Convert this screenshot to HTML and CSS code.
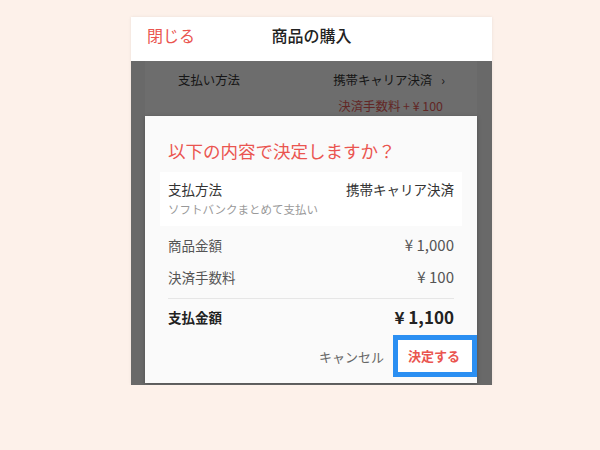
FILE: index.html
```html
<!DOCTYPE html>
<html lang="ja">
<head>
<meta charset="utf-8">
<title>商品の購入</title>
<link rel="stylesheet" href="styles.css">
</head>
<body>
<div class="PHONE">
  <div class="HEADER">
    <a class="CLOSE" href="#">閉じる</a>
    <span class="TITLE">商品の購入</span>
    <span></span>
  </div>
  <div class="CONTENT">
    <!-- page behind the dialog -->
    <div class="CARD">
      <div class="ROW">
        <span>支払い方法</span>
        <span>携帯キャリア決済<span class="ARROW">›</span></span>
      </div>
      <div class="FEE">決済手数料 + ¥ 100</div>
    </div>
    <div class="OVERLAY">
      <div class="DIALOG">
        <h2>以下の内容で決定しますか？</h2>
        <div class="METHOD">
          <div class="LINE">
            <span>支払方法</span>
            <span class="VALUE">携帯キャリア決済</span>
          </div>
          <div class="SUB">ソフトバンクまとめて支払い</div>
        </div>
        <div class="LINE PRICE">
          <span>商品金額</span>
          <span>¥ 1,000</span>
        </div>
        <div class="LINE PRICE">
          <span>決済手数料</span>
          <span>¥ 100</span>
        </div>
        <hr>
        <div class="LINE TOTAL">
          <span>支払金額</span>
          <span class="SUM">¥ 1,100</span>
        </div>
        <div class="BUTTONS">
          <a class="CANCEL" href="#">キャンセル</a>
          <a class="OK" href="#">決定する</a>
        </div>
      </div>
    </div>
  </div>
</div>
</body>
</html>
```

FILE: styles.css
```css
BODY {
	margin		: 0;
	background-color: #fdf1ea;
	font-family	: "Noto Sans CJK JP", "Noto Sans", sans-serif;
	color		: #333;
}
A {	text-decoration	: none; }

.PHONE {
	width		: 361px;
	height		: 368px;
	margin		: 17px 0 0 131px;
	display		: flex;
	flex-direction	: column;
	box-shadow	: 0 0 3px rgba(0,0,0,0.08);
}

/* header bar */
.HEADER {
	height		: 44px;
	box-sizing	: border-box;
	padding		: 7px 16px 0;
	background	: #fff;
	display		: grid;
	grid-template-columns: 1fr auto 1fr;
	align-items	: start;
	font-size	: 16px;
	line-height	: 22px;
}
.CLOSE {	color		: #ea5550; }
.TITLE {
	color		: #222;
	font-weight	: 500;
}

/* content under the overlay */
.CONTENT {
	flex		: 1;
	position	: relative;
	background	: #f0f0f0;
	padding		: 0 15px 0 14px;
	overflow	: hidden;
}
.CARD {
	height		: 100%;
	background	: #f7f7f7;
	padding		: 2px 32px 0 33px;
	font-size	: 12.4px;
}
.ROW {
	display		: flex;
	justify-content	: space-between;
	line-height	: 34px;
}
.ARROW {	margin-left	: 9px; }
.FEE {
	text-align	: right;
	line-height	: 18px;
	color		: #e05a55;
	padding-right	: 2px;
}

.OVERLAY {
	position	: absolute;
	top		: 0;
	left		: 0;
	right		: 0;
	bottom		: 0;
	background	: rgba(0,0,0,0.56);
	padding		: 55px 15px 0 14px;
}

/* dialog */
.DIALOG {
	background	: #fafafa;
	padding		: 23px 15px 6px;
	box-shadow	: 0 1px 4px rgba(0,0,0,0.25);
}
.DIALOG H2 {
	margin		: 0 0 9px;
	padding-left	: 8px;
	font-size	: 17.5px;
	font-weight	: normal;
	line-height	: 24px;
	color		: #ea5550;
}
.METHOD {
	background	: #fff;
	padding		: 7px 8px 8px;
}
.LINE {
	display		: flex;
	justify-content	: space-between;
	font-size	: 13.5px;
	line-height	: 21px;
}
.METHOD .LINE {	color		: #333; }
.SUB {
	font-size	: 11.5px;
	line-height	: 18px;
	color		: #999;
}
.PRICE {
	padding		: 0 8px;
	line-height	: 32px;
	color		: #555;
}
.PRICE:first-of-type, .METHOD + .PRICE { margin-top: 3px; }
.PRICE SPAN + SPAN { font-size	: 15px; }
.DIALOG HR {
	margin		: 5px 8px 0;
	border		: 0;
	border-top	: 1px solid #e6e6e6;
}
.TOTAL {
	padding		: 0 8px;
	line-height	: 36px;
	font-weight	: bold;
	color		: #222;
}
.SUM {	font-size	: 17px; }

.BUTTONS {
	display		: flex;
	justify-content	: flex-end;
	align-items	: center;
	gap		: 9px;
	margin-right	: -15px;
	font-size	: 13px;
}
.CANCEL {	color		: #666; }
.OK {
	color		: #ea5550;
	font-weight	: bold;
	line-height	: 32px;
	padding		: 0 12px 0 10px;
	border		: 5px solid #2b8ff2;
	background	: #fff;
}
```
